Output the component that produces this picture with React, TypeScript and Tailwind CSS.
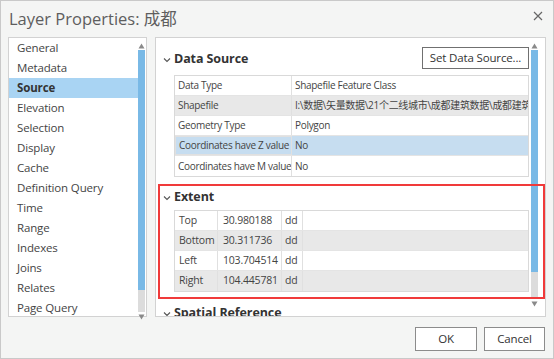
import { ReactNode } from "react";

const FONT = { fontFamily: '"Open Sans", "Noto Sans CJK SC", sans-serif' };

const navItems = [
  "General",
  "Metadata",
  "Source",
  "Elevation",
  "Selection",
  "Display",
  "Cache",
  "Definition Query",
  "Time",
  "Range",
  "Indexes",
  "Joins",
  "Relates",
  "Page Query",
];

const sourceRows = [
  ["Data Type", "Shapefile Feature Class"],
  ["Shapefile", "I:\\数据\\矢量数据\\21个二线城市\\成都建筑数据\\成都建筑数据.shp"],
  ["Geometry Type", "Polygon"],
  ["Coordinates have Z value", "No"],
  ["Coordinates have M value", "No"],
];

const extentRows = [
  ["Top", "30.980188"],
  ["Bottom", "30.311736"],
  ["Left", "103.704514"],
  ["Right", "104.445781"],
];

function Chevron() {
  return (
    <svg width="8" height="6" viewBox="0 0 8 6" className="mr-[3px] shrink-0">
      <path d="M1 1.5 L4 4.5 L7 1.5" fill="none" stroke="#555" strokeWidth="1.1" />
    </svg>
  );
}

// thin vertical scrollbar: arrow, blue thumb, grey track, arrow
function ScrollBar({ thumb, track }: { thumb: number; track: number }) {
  return (
    <div className="flex w-[7px] flex-col items-center">
      <svg width="7" height="6" viewBox="0 0 7 6" className="mt-[5px]">
        <path d="M3.5 0.5 L6.5 5.5 L0.5 5.5 Z" fill="#8a8a8a" />
      </svg>
      <div className="mt-[1px] w-[7px] bg-[#79b9e6]" style={{ height: thumb }} />
      <div className="w-[7px] bg-[#dcdcdc]" style={{ height: track }} />
      <svg width="7" height="6" viewBox="0 0 7 6" className="mt-[2px]">
        <path d="M0.5 0.5 L6.5 0.5 L3.5 5.5 Z" fill="#8a8a8a" />
      </svg>
    </div>
  );
}

function Section({ title, right }: { title: string; right?: ReactNode }) {
  return (
    <div className="flex h-[22px] items-center">
      <div className="ml-[7px] mt-[3px] flex items-center">
        <Chevron />
        <span className="text-[12.5px] font-bold tracking-[-0.1px] text-[#333]">{title}</span>
      </div>
      <div className="flex-1" />
      {right}
    </div>
  );
}

export default function App() {
  return (
    <div
      className="relative flex h-[359px] w-[554px] flex-col overflow-hidden border border-[#c9c9c9] bg-[#f4f5f4] text-[11px] tracking-[-0.15px] text-[#444]"
      style={FONT}
    >
      {/* title bar */}
      <div className="flex h-[36px] items-center pl-[8px] pr-[8px]">
        <span className="text-[16.5px] tracking-normal text-[#5e5e5e]">Layer Properties: 成都</span>
        <div className="flex-1" />
        <svg width="10" height="10" viewBox="0 0 10 10" className="mr-[2px] mt-[-6px]">
          <path d="M1 1 L9 9 M9 1 L1 9" stroke="#666" strokeWidth="1.2" />
        </svg>
      </div>

      <div className="flex h-[280px] pl-[7px]">
        {/* page list */}
        <div className="flex h-[280px] w-[139px] border border-[#d2d2d2] bg-white">
          <div className="flex-1 text-[11.5px]">
            {navItems.map((item) => (
              <div
                key={item}
                className={`flex h-[20px] items-center pl-[8px] ${
                  item === "Source" ? "bg-[#a9d4f3] font-bold text-[#333]" : "text-[#444]"
                }`}
              >
                {item}
              </div>
            ))}
          </div>
          <div className="mr-[1px]">
            <ScrollBar thumb={240} track={22} />
          </div>
        </div>

        {/* properties panel */}
        <div className="ml-[8px] flex h-[280px] w-[391px] overflow-hidden border border-[#d2d2d2] bg-white">
          <div className="flex-1 overflow-hidden pt-[9px]">
            <Section
              title="Data Source"
              right={
                <button className="mr-[2px] h-[22px] w-[107px] border border-[#707070] bg-white text-[11.5px] text-[#333]">
                  Set Data Source...
                </button>
              }
            />
            <div className="ml-[18px] mr-[2px] mt-[6px] border border-[#d9d9d9] text-[10px] tracking-[-0.3px]">
              {sourceRows.map(([k, v], i) => (
                <div
                  key={k}
                  className={`flex h-[20px] border-b border-[#e4e4e4] last:border-b-0 ${
                    i === 1 ? "bg-[#e8e8e8]" : i === 3 ? "bg-[#c6ddf0]" : "bg-white"
                  }`}
                >
                  <div
                    className={`flex w-[117px] shrink-0 items-center overflow-hidden whitespace-nowrap border-r border-[#e0e0e0] pl-[3px] ${
                      i === 3 ? "border border-[#90bde3]" : ""
                    }`}
                  >
                    {k}
                  </div>
                  <div className="flex min-w-0 flex-1 items-center overflow-hidden whitespace-nowrap pl-[3px]">
                    {v}
                  </div>
                </div>
              ))}
            </div>

            <div className="mt-[8px]">
              <Section title="Extent" />
            </div>
            <div className="ml-[18px] mr-[2px] mt-[3px] border border-[#d9d9d9] text-[10.5px] tracking-[-0.2px]">
              {extentRows.map(([k, v], i) => (
                <div
                  key={k}
                  className={`flex h-[20px] border-b border-[#e4e4e4] last:border-b-0 ${
                    i % 2 === 1 ? "bg-[#e8e8e8]" : "bg-white"
                  }`}
                >
                  <div className="flex w-[43px] items-center border-r border-[#e0e0e0] pl-[4px]">{k}</div>
                  <div className="flex w-[64px] items-center border-r border-[#e0e0e0] pl-[5px]">{v}</div>
                  <div className="flex w-[21px] items-center border-r border-[#e0e0e0] pl-[3px]">dd</div>
                  <div className="flex-1" />
                </div>
              ))}
            </div>

            <div className="mt-[9px]">
              <Section title="Spatial Reference" />
            </div>
          </div>
          <div className="mr-[7px]">
            <ScrollBar thumb={222} track={27} />
          </div>
        </div>
      </div>

      {/* dialog buttons */}
      <div className="flex flex-1 items-start justify-end gap-[7px] pr-[8px] pt-[10px]">
        <button className="h-[24px] w-[62px] border border-[#8c8c8c] bg-white text-[11.5px] text-[#333]">OK</button>
        <button className="h-[24px] w-[61px] border border-[#8c8c8c] bg-white text-[11.5px] text-[#333]">Cancel</button>
      </div>

      {/* red annotation box */}
      <div className="pointer-events-none absolute left-[157px] top-[183px] h-[115px] w-[387px] border-2 border-[#f03a3a]" />
    </div>
  );
}
